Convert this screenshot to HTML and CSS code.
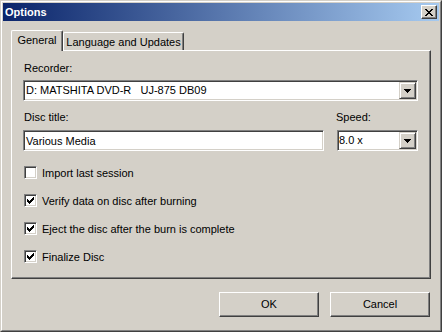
FILE: index.html
```html
<!DOCTYPE html>
<html>
<head>
<meta charset="utf-8">
<title>Options</title>
<link rel="stylesheet" href="styles.css">
</head>
<body>
<div class="window">
  <div class="frame">
    <div class="titlebar">
      <span class="title">Options</span>
      <span class="close"><svg width="8" height="7" viewBox="0 0 8 7" shape-rendering="crispEdges"><path fill="#000" d="M0 0h2v1h-2z M6 0h2v1h-2z M1 1h2v1h-2z M5 1h2v1h-2z M2 2h4v1h-4z M3 3h2v1h-2z M2 4h4v1h-4z M1 5h2v1h-2z M5 5h2v1h-2z M0 6h2v1h-2z M6 6h2v1h-2z"/></svg></span>
    </div>
    <div class="body">
      <div class="tabs">
        <div class="tab active">General</div>
        <div class="tab">Language and Updates</div>
      </div>
      <div class="panel">
        <div class="label">Recorder:</div>
        <div class="combo recorder">
          <span class="value">D: MATSHITA DVD-R   UJ-875 DB09</span>
          <span class="drop"><svg width="7" height="4" viewBox="0 0 7 4" shape-rendering="crispEdges"><path fill="#000" d="M0 0h7v1h-1v1h-1v1h-1v1h-1v-1h-1v-1h-1v-1h-1z"/></svg></span>
        </div>
        <div class="row">
          <div class="col title-col">
            <div class="label">Disc title:</div>
            <div class="input">Various Media</div>
          </div>
          <div class="col speed-col">
            <div class="label">Speed:</div>
            <div class="combo speed">
              <span class="value tight">8.0 x</span>
              <span class="drop"><svg width="7" height="4" viewBox="0 0 7 4" shape-rendering="crispEdges"><path fill="#000" d="M0 0h7v1h-1v1h-1v1h-1v1h-1v-1h-1v-1h-1v-1h-1z"/></svg></span>
            </div>
          </div>
        </div>
        <div class="checks">
          <div class="check"><span class="box"></span><span class="text">Import last session</span></div>
          <div class="check"><span class="box"><svg width="9" height="9" viewBox="0 0 9 9" shape-rendering="crispEdges"><path fill="#000" d="M1 3h1v3h-1z M2 4h1v3h-1z M3 5h1v3h-1z M4 4h1v3h-1z M5 3h1v3h-1z M6 2h1v3h-1z M7 1h1v3h-1z"/></svg></span><span class="text">Verify data on disc after burning</span></div>
          <div class="check"><span class="box"><svg width="9" height="9" viewBox="0 0 9 9" shape-rendering="crispEdges"><path fill="#000" d="M1 3h1v3h-1z M2 4h1v3h-1z M3 5h1v3h-1z M4 4h1v3h-1z M5 3h1v3h-1z M6 2h1v3h-1z M7 1h1v3h-1z"/></svg></span><span class="text">Eject the disc after the burn is complete</span></div>
          <div class="check"><span class="box"><svg width="9" height="9" viewBox="0 0 9 9" shape-rendering="crispEdges"><path fill="#000" d="M1 3h1v3h-1z M2 4h1v3h-1z M3 5h1v3h-1z M4 4h1v3h-1z M5 3h1v3h-1z M6 2h1v3h-1z M7 1h1v3h-1z"/></svg></span><span class="text">Finalize Disc</span></div>
        </div>
      </div>
      <div class="buttons">
        <div class="button">OK</div>
        <div class="button">Cancel</div>
      </div>
    </div>
  </div>
</div>
</body>
</html>
```
FILE: styles.css
```css
* { box-sizing: border-box; }
html, body { margin: 0; padding: 0; }
body {
  background: #d4d0c8;
  font-family: "Liberation Sans", Arial, sans-serif;
  font-size: 11px;
  color: #000;
}
.window {
  width: 442px;
  height: 332px;
  border: 1px solid;
  border-color: #d4d0c8 #404040 #404040 #d4d0c8;
  background: #d4d0c8;
}
.frame {
  height: 100%;
  border: 1px solid;
  border-color: #fff #808080 #808080 #fff;
  padding: 1px;
  display: flex;
  flex-direction: column;
}
.titlebar {
  height: 18px;
  flex: none;
  background: linear-gradient(to right, #0a246a, #a6caf0);
  display: flex;
  align-items: center;
  justify-content: space-between;
  padding: 0 2px 0 2px;
}
.title {
  color: #fff;
  font-weight: bold;
  font-size: 11px;
  line-height: 18px;
}
.close {
  width: 16px;
  height: 14px;
  background: #d4d0c8;
  border: 1px solid;
  border-color: #fff #404040 #404040 #fff;
  box-shadow: inset -1px -1px #808080;
  display: flex;
  align-items: center;
  justify-content: center;
  padding-right: 1px;
}
.close svg { display: block; }
.body {
  flex: 1;
  padding: 9px 0 0 8px;
  display: flex;
  flex-direction: column;
}
.tabs {
  width: 420px;
  height: 20px;
  display: flex;
  align-items: flex-end;
}
.tab {
  height: 18px;
  width: 121px;
  border-top: 1px solid #fff;
  border-left: 1px solid #fff;
  border-right: 1px solid #404040;
  box-shadow: inset -1px 0 #808080;
  border-radius: 2px 2px 0 0;
  text-align: center;
  line-height: 16px;
  padding-top: 1px;
  background: #d4d0c8;
}
.tab.active {
  width: 52px;
  height: 21px;
  margin-bottom: -1px;
  position: relative;
  z-index: 1;
  line-height: 18px;
  padding-top: 0;
}
.panel {
  width: 420px;
  height: 229px;
  border-top: 1px solid #fff;
  border-left: 1px solid #fff;
  border-right: 1px solid #404040;
  border-bottom: 1px solid #404040;
  box-shadow: inset -1px -1px #808080;
  padding: 11px 11px 0 11px;
}
.label {
  line-height: 13px;
  height: 13px;
  padding-left: 1px;
}
.combo, .input {
  height: 21px;
  background: #fff;
  border: 1px solid;
  border-color: #808080 #fff #fff #808080;
  box-shadow: inset 1px 1px #404040, inset -1px -1px #d4d0c8;
  padding: 1px;
  display: flex;
  align-items: center;
}
.combo.recorder { width: 395px; margin-top: 5px; }
.value {
  flex: 1;
  white-space: pre;
  padding-left: 1px;
  line-height: 17px;
}
.value.tight { padding-left: 0; }
.drop {
  width: 17px;
  height: 17px;
  flex: none;
  background: #d4d0c8;
  border: 1px solid;
  border-color: #d4d0c8 #404040 #404040 #d4d0c8;
  box-shadow: inset 1px 1px #fff, inset -1px -1px #808080;
  display: flex;
  align-items: center;
  justify-content: center;
  padding-top: 1px;
}
.drop svg { display: block; }
.row {
  display: flex;
  gap: 13px;
  margin-top: 10px;
}
.title-col { width: 301px; }
.speed-col { width: 81px; }
.speed-col .label { padding-left: 0; margin-left: -1px; }
.input, .col .combo { margin-top: 6px; }
.input { padding-left: 2px; }
.checks {
  margin-top: 15px;
  display: flex;
  flex-direction: column;
  gap: 15px;
  padding-left: 1px;
}
.check {
  display: flex;
  align-items: center;
  height: 13px;
}
.box {
  width: 13px;
  height: 13px;
  flex: none;
  background: #fff;
  border: 1px solid;
  border-color: #808080 #fff #fff #808080;
  box-shadow: inset 1px 1px #404040, inset -1px -1px #d4d0c8;
  padding: 1px;
}
.box svg { display: block; }
.text {
  margin-left: 5px;
  line-height: 13px;
  padding-top: 2px;
}
.buttons {
  display: flex;
  justify-content: flex-end;
  gap: 11px;
  margin-top: 13px;
  padding-right: 1px;
  width: 420px;
}
.button {
  width: 100px;
  height: 25px;
  border: 1px solid;
  border-color: #fff #404040 #404040 #fff;
  box-shadow: inset -1px -1px #808080;
  display: flex;
  align-items: center;
  justify-content: center;
  padding-bottom: 1px;
}
```
